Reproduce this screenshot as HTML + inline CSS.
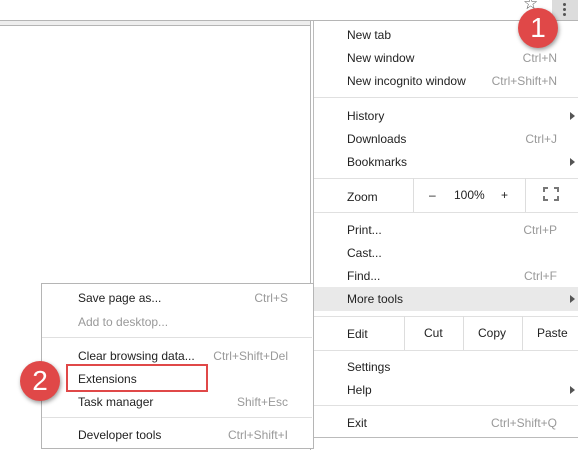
<!DOCTYPE html>
<html><head><style>
body{margin:0;width:578px;height:469px;background:#fff;position:relative;overflow:hidden;font-family:"Liberation Sans",sans-serif;font-size:12px;color:#222}
.a{position:absolute}
.t{position:absolute;line-height:14px;white-space:nowrap}
.s{color:#999}
.vl{position:absolute;background:#ddd;width:1px}
.hr{position:absolute;background:#e0e0e0;height:1px}
.arr{position:absolute;width:0;height:0;border-left:5px solid #555;border-top:4px solid transparent;border-bottom:4px solid transparent}
.badge{position:absolute;width:40px;height:40px;border-radius:50%;background:#e04848;color:#fff;font-size:28px;text-align:center;line-height:40px;box-shadow:1px 2px 4px rgba(0,0,0,.4)}
</style></head><body>
<div class="a" style="left:0;top:20px;width:310px;height:4px;background:#eee;border-top:1px solid #b5b5b5;border-bottom:1px solid #b5b5b5"></div>
<div class="a" style="left:310px;top:20px;width:1px;height:430px;background:#b5b5b5"></div>
<div class="a" style="left:310px;top:20px;width:268px;height:1px;background:#b5b5b5"></div>
<div class="a" style="left:552px;top:0;width:26px;height:20px;background:#dcdcdc"></div>
<div class="a" style="left:563px;top:3px;width:3px;height:3px;background:#555;border-radius:50%;box-shadow:0 5px 0 #555,0 10px 0 #555"></div>
<div class="t" style="left:523px;top:-3px;font-size:17px;color:#555">☆</div>
<div class="a" style="left:313px;top:21px;width:265px;height:416px;background:#fff;border-left:1px solid #bbb;border-bottom:1px solid #bbb"></div>
<div class="t" style="left:347px;top:28px">New tab</div>
<div class="t" style="left:347px;top:51px">New window</div><div class="t s" style="right:21px;top:51px">Ctrl+N</div>
<div class="t" style="left:347px;top:74px">New incognito window</div><div class="t s" style="right:21px;top:74px">Ctrl+Shift+N</div>
<div class="hr" style="left:314px;top:97px;width:264px"></div>
<div class="t" style="left:347px;top:109px">History</div><div class="arr" style="left:570px;top:112px"></div>
<div class="t" style="left:347px;top:132px">Downloads</div><div class="t s" style="right:21px;top:132px">Ctrl+J</div>
<div class="t" style="left:347px;top:155px">Bookmarks</div><div class="arr" style="left:570px;top:158px"></div>
<div class="hr" style="left:314px;top:178px;width:264px"></div>
<div class="t" style="left:347px;top:190px">Zoom</div>
<div class="vl" style="left:413px;top:178px;height:34px"></div>
<div class="t" style="left:429px;top:188px">–</div>
<div class="t" style="left:454px;top:188px">100%</div>
<div class="t" style="left:501px;top:188px">+</div>
<div class="vl" style="left:525px;top:178px;height:34px"></div>
<svg class="a" style="left:543px;top:187px" width="16" height="14" viewBox="0 0 16 14"><path d="M1 5V1h4M11 1h4v4M15 9v4h-4M5 13H1V9" fill="none" stroke="#777" stroke-width="2"/></svg>
<div class="hr" style="left:314px;top:212px;width:264px"></div>
<div class="t" style="left:347px;top:223px">Print...</div><div class="t s" style="right:21px;top:223px">Ctrl+P</div>
<div class="t" style="left:347px;top:246px">Cast...</div>
<div class="t" style="left:347px;top:269px">Find...</div><div class="t s" style="right:21px;top:269px">Ctrl+F</div>
<div class="a" style="left:314px;top:287px;width:264px;height:24px;background:#e9e9e9"></div>
<div class="t" style="left:347px;top:292px">More tools</div><div class="arr" style="left:570px;top:295px"></div>
<div class="hr" style="left:314px;top:316px;width:264px"></div>
<div class="t" style="left:347px;top:327px">Edit</div>
<div class="vl" style="left:404px;top:316px;height:34px"></div>
<div class="t" style="left:424px;top:326px">Cut</div>
<div class="vl" style="left:463px;top:316px;height:34px"></div>
<div class="t" style="left:478px;top:326px">Copy</div>
<div class="vl" style="left:522px;top:316px;height:34px"></div>
<div class="t" style="left:537px;top:326px">Paste</div>
<div class="hr" style="left:314px;top:350px;width:264px"></div>
<div class="t" style="left:347px;top:360px">Settings</div>
<div class="t" style="left:347px;top:383px">Help</div><div class="arr" style="left:570px;top:386px"></div>
<div class="hr" style="left:314px;top:405px;width:264px"></div>
<div class="t" style="left:347px;top:416px">Exit</div><div class="t s" style="right:21px;top:416px">Ctrl+Shift+Q</div>
<div class="a" style="left:41px;top:283px;width:271px;height:164px;background:#fff;border:1px solid #b5b5b5"></div>
<div class="t" style="left:78px;top:291px">Save page as...</div><div class="t s" style="right:290px;top:291px">Ctrl+S</div>
<div class="t s" style="left:78px;top:315px">Add to desktop...</div>
<div class="hr" style="left:42px;top:337px;width:270px"></div>
<div class="t" style="left:78px;top:349px">Clear browsing data...</div><div class="t s" style="right:290px;top:349px">Ctrl+Shift+Del</div>
<div class="t" style="left:78px;top:372px">Extensions</div>
<div class="a" style="left:66px;top:364px;width:142px;height:28px;border:2px solid #e04848;box-sizing:border-box"></div>
<div class="t" style="left:78px;top:395px">Task manager</div><div class="t s" style="right:290px;top:395px">Shift+Esc</div>
<div class="hr" style="left:42px;top:417px;width:270px"></div>
<div class="t" style="left:78px;top:428px">Developer tools</div><div class="t s" style="right:290px;top:428px">Ctrl+Shift+I</div>
<div class="badge" style="left:518px;top:8px">1</div>
<div class="badge" style="left:20px;top:361px">2</div>
</body></html>
